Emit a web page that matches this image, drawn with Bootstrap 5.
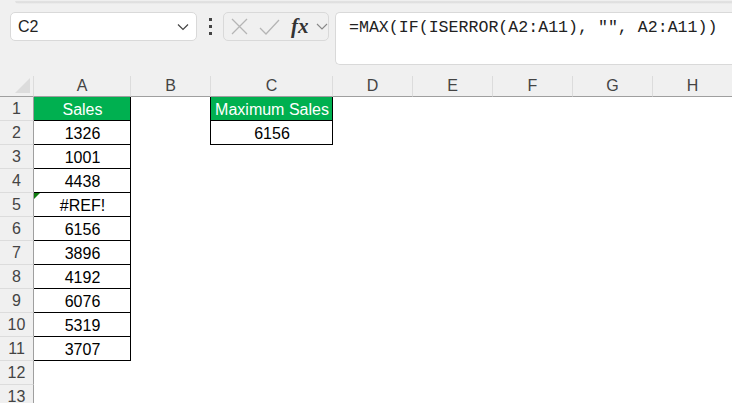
<!DOCTYPE html>
<html lang="en">
<head>
  <meta charset="UTF-8">
  <meta name="viewport" content="width=device-width, initial-scale=1.0">
  <title>Sales</title>
  <link href="https://cdn.jsdelivr.net/npm/bootstrap@5.3.3/dist/css/bootstrap.min.css" rel="stylesheet">
  <style>
    html, body { height: 100%; overflow: hidden; }
    body { background: #fff; font-family: "Liberation Sans", Arial, sans-serif; color: #000; }
    .top-strip { height: 76px; background: #f0f0f0; padding-top: 12px; padding-left: 10px; }
    .ribbon-edge { height: 4px; margin-left: 5px; margin-top: -12px; margin-bottom: 8px; background: linear-gradient(#f6f6f6, #dadada 50%, #f0f0f0); border-bottom-left-radius: 4px; }
    .name-box { width: 187px; height: 29px; background: #fff; border: 1px solid #d9d9d9; border-radius: 5px; padding: 0 7px; font-size: 16px; color: #222; }
    .dots-col { width: 26px; height: 29px; }
    .dots-col i { display: block; width: 3px; height: 3px; background: #444; margin: 2px 0; }
    .fx-box { width: 106px; height: 29px; border: 1px solid #d9d9d9; border-radius: 5px; padding: 0 0 0 7px; }
    .fx-check { margin-left: 11px; }
    .fx-text { margin-left: 11px; font-family: "Liberation Serif", serif; font-style: italic; font-weight: 700; font-size: 21px; color: #333; line-height: 1; }
    .fx-caret { margin-left: 7px; }
    .formula-box { margin-left: 6px; flex: 1; height: 53px; background: #fff; border: 1px solid #d9d9d9; border-right: 0; border-top-left-radius: 5px; border-bottom-left-radius: 5px; padding: 4px 0 0 13px; font-family: "Liberation Mono", monospace; font-size: 16.6px; line-height: 22px; white-space: pre; color: #222; }
    .sheet { table-layout: fixed; border-collapse: separate; border-spacing: 0; width: 733px; font-size: 16px; }
    .col-head { width: 34px; }
    .col-a { width: 97px; }
    .col-b { width: 80px; }
    .col-c { width: 122px; }
    .col-rest { width: 80px; }
    .sheet td, .sheet th { padding: 0; text-align: center; font-weight: 400; overflow: hidden; white-space: nowrap; line-height: 1; }
    .sheet tbody td, .sheet tbody th { padding-top: 1px; }
    .sheet thead th { height: 21px; background: #f0f0f0; color: #444; border-right: 1px solid #dcdcdc; border-bottom: 1px solid #9f9f9f; }
    .sheet tbody tr { height: 24px; }
    .sheet tbody th { background: #f0f0f0; color: #444; border-right: 1px solid #9f9f9f; border-bottom: 1px solid #dcdcdc; }
    .corner { position: relative; }
    .corner::after { content: ""; position: absolute; right: 3px; bottom: 3px; border-style: solid; border-width: 0 0 15px 15px; border-color: transparent transparent #dcdcdc transparent; }
    .boxed { box-shadow: inset -1px -1px 0 #000; }
    .green-head { background: #00b050; color: #fff; }
    .right-line { box-shadow: inset -1px 0 0 #000; }
    .err-cell { position: relative; }
    .err-cell::before { content: ""; position: absolute; left: 0; top: 0; border-style: solid; border-width: 6px 6px 0 0; border-color: #107c10 transparent transparent transparent; }
  </style>
</head>
<body>
  <div class="top-strip">
    <div class="ribbon-edge"></div>
    <div class="d-flex align-items-start">
      <div class="name-box d-flex align-items-center justify-content-between">
        <span>C2</span>
        <svg width="12" height="8" viewBox="0 0 12 8"><path d="M1 1.500 6 6.500 11 1.500" fill="none" stroke="#444" stroke-width="1.2"/></svg>
      </div>
      <div class="dots-col d-flex flex-column align-items-center justify-content-center"><i></i><i></i><i></i></div>
      <div class="fx-box d-flex align-items-center">
        <svg width="17" height="17" viewBox="0 0 17 17"><path d="M1 1 16 16M16 1 1 16" fill="none" stroke="#b5b5b5" stroke-width="1.3"/></svg>
        <svg class="fx-check" width="21" height="16" viewBox="0 0 21 16"><path d="M1 9 7 15 20 1" fill="none" stroke="#b5b5b5" stroke-width="1.3"/></svg>
        <span class="fx-text">fx</span>
        <svg class="fx-caret" width="12" height="7" viewBox="0 0 12 7"><path d="M1 1 6 6 11 1" fill="none" stroke="#888" stroke-width="1.1"/></svg>
      </div>
      <div class="formula-box">=MAX(IF(ISERROR(A2:A11), "", A2:A11))</div>
    </div>
  </div>
  <table class="sheet">
    <colgroup>
      <col class="col-head"><col class="col-a"><col class="col-b"><col class="col-c"><col class="col-rest"><col class="col-rest"><col class="col-rest"><col class="col-rest"><col class="col-rest">
    </colgroup>
    <thead id="sheetHead"></thead>
    <tbody id="sheetBody"></tbody>
  </table>
  <script>
    const colNames = ["A", "B", "C", "D", "E", "F", "G", "H"];
    const colA = ["Sales", "1326", "1001", "4438", "#REF!", "6156", "3896", "4192", "6076", "5319", "3707"];
    const colC = ["Maximum Sales", "6156"];
    let head = '<tr><th class="corner"></th>' + colNames.map(c => `<th>${c}</th>`).join("") + "</tr>";
    document.getElementById("sheetHead").innerHTML = head;
    let body = "";
    for (let r = 0; r < 13; r++) {
      let a = colA[r], c = colC[r];
      let row = `<tr><th>${r + 1}</th>`;
      if (a !== undefined) {
        let cls = "boxed" + (r === 0 ? " green-head" : "") + (a === "#REF!" ? " err-cell" : "");
        row += `<td class="${cls}">${a}</td>`;
      } else row += "<td></td>";
      // column B carries the left edge of the C box
      row += c !== undefined ? '<td class="right-line"></td>' : "<td></td>";
      if (c !== undefined) {
        row += `<td class="boxed${r === 0 ? " green-head" : ""}">${c}</td>`;
      } else row += "<td></td>";
      row += "<td></td><td></td><td></td><td></td><td></td></tr>";
      body += row;
    }
    document.getElementById("sheetBody").innerHTML = body;
  </script>
  <script src="https://cdn.jsdelivr.net/npm/bootstrap@5.3.3/dist/js/bootstrap.bundle.min.js"></script>
</body>
</html>
